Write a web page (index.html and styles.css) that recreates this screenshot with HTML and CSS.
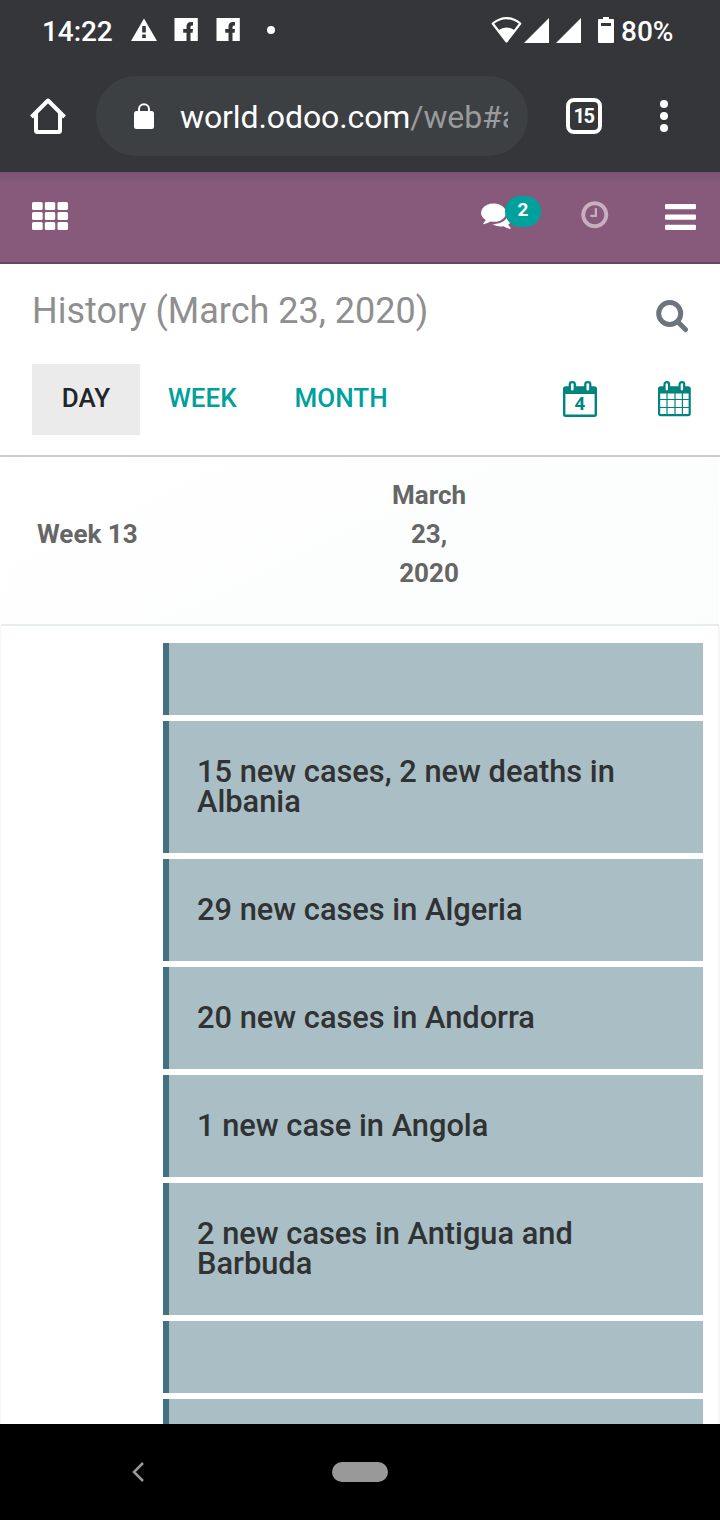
FILE: index.html
```html
<!DOCTYPE html>
<html lang="en">
<head>
<meta charset="utf-8">
<title>History</title>
<link rel="stylesheet" href="styles.css">
</head>
<body>
<div class="screen">
  <header class="browser">
    <div class="status">
      <span class="clock">14:22</span>
      <svg class="notifications" width="146" height="24" viewBox="0 0 146 24" fill="#fff">
        <path fill-rule="evenodd" d="M13 .5 26 23H0zM11.200 8v6.500h3.600V8zm0 8.500v3.500h3.600v-3.500z"/>
        <path d="M43.500 0h23.300v23H43.500zM85.500 0h23.300v23H85.500z"/>
        <path d="M55.500 23v-8.300h-3.300V11h3.300V8.500q0-4.500 4.500-4.500h2v3.400h-1q-1.500 0-1.500 1.500V11H62l-.4 3.700h-2.100V23zM97.500 23v-8.300h-3.300V11h3.300V8.500q0-4.500 4.500-4.500h2v3.400h-1q-1.500 0-1.500 1.500V11h2.500l-.4 3.700h-2.100V23z" fill="#35363a"/>
        <circle cx="140" cy="12" r="4"/>
      </svg>
      <svg class="signals" width="123" height="28" viewBox="0 0 123 28" fill="#fff">
        <path d="M15.500 25.500 1.700 7.500Q15.500-3.200 29.300 7.500z" fill="none" stroke="#fff" stroke-width="2.200" stroke-linejoin="round"/>
        <path d="M15.500 26 7 14.600q8.500-6.200 17 0z"/>
        <path d="M33 27 58 2v25zM65 27 90 2v25z"/>
        <path fill-rule="evenodd" d="M108 3h4V1h6v2h4q1 0 1 1v22q0 1-1 1h-14q-1 0-1-1V4q0-1 1-1zm2 4v3h10V7z"/>
      </svg>
      <span class="battery">80%</span>
    </div>
    <div class="toolbar">
      <svg class="home" width="36" height="36" viewBox="0 0 36 36" fill="none" stroke="#fff" stroke-width="4" stroke-linejoin="round">
        <path d="M1.500 19 18 2.500 34.500 19M6 15v17.500q0 1.500 1.500 1.500h21q1.500 0 1.500-1.500V15"/>
      </svg>
      <div class="address">
        <svg width="20" height="26" viewBox="0 0 20 26">
          <rect y="8" width="20" height="18" rx="2.500" fill="#fff"/>
          <path d="M5 9V6.200a5 5 0 0 1 10 0V9" fill="none" stroke="#fff" stroke-width="2"/>
        </svg>
        <div class="url">world.odoo.com<span>/web#a</span></div>
      </div>
      <div class="tabs">15</div>
      <svg class="more" width="8" height="32" viewBox="0 0 8 32" fill="#fff">
        <circle cx="4" cy="4" r="4"/><circle cx="4" cy="16" r="4"/><circle cx="4" cy="28" r="4"/>
      </svg>
    </div>
  </header>

  <nav class="navbar">
    <svg class="apps" width="36" height="28" viewBox="0 0 36 28" fill="#fff">
      <rect width="10.700" height="8" rx="1.500"/><rect x="12.800" width="10.400" height="8" rx="1.500"/><rect x="25.500" width="10.500" height="8" rx="1.500"/>
      <rect y="10" width="10.700" height="8" rx="1.500"/><rect x="12.800" y="10" width="10.400" height="8" rx="1.500"/><rect x="25.500" y="10" width="10.500" height="8" rx="1.500"/>
      <rect y="20" width="10.700" height="8" rx="1.500"/><rect x="12.800" y="20" width="10.400" height="8" rx="1.500"/><rect x="25.500" y="20" width="10.500" height="8" rx="1.500"/>
    </svg>
    <div class="messages">
      <svg width="32" height="32" viewBox="0 0 1792 1792" fill="#fff"><path d="M1408 768q0 139-94 257t-256.500 186.500-353.500 68.500q-86 0-176-16-124 88-278 128-36 9-86 16h-3q-11 0-20.500-8t-11.500-21q-1-3-1-6.500t.5-6.500 2-6l2.500-5 3.500-5.500 4-5 4.500-5 4-4.500q5-6 23-25t26-29.500 22.500-29 25-38.500 20.500-44q-124-72-195-177t-71-224q0-139 94-257t256.500-186.500 353.500-68.500 353.500 68.500 256.500 186.500 94 257zm384 256q0 120-71 224.500t-195 176.500q10 24 20.500 44t25 38.500 22.500 29 26 29.500 23 25q1 1 4 4.500t4.500 5 4 5 3.500 5.500l2.500 5 2 6 .5 6.500-1 6.500q-3 14-13 22t-22 7q-50-7-86-16-154-40-278-128-90 16-176 16-271 0-472-132 58 4 88 4 161 0 309-45t264-129q125-92 192-212t67-254q0-77-23-152 129 71 204 178t75 230z"/></svg>
      <span class="badge">2</span>
    </div>
    <svg class="activity" width="31.500" height="31.500" viewBox="0 0 1792 1792"><path d="M1024 544v448q0 14-9 23t-23 9h-320q-14 0-23-9t-9-23v-64q0-14 9-23t23-9h224v-352q0-14 9-23t23-9h64q14 0 23 9t9 23zm416 352q0-148-73-273t-198-198-273-73-273 73-198 198-73 273 73 273 198 198 273 73 273-73 198-198 73-273zm224 0q0 209-103 385.500t-279.500 279.500-385.500 103-385.500-103-279.500-279.500-103-385.500 103-385.500 279.500-279.500 385.500-103 385.500 103 279.500 279.500 103 385.500z"/></svg>
    <svg class="menu" width="31" height="26" viewBox="0 0 31 26" fill="#fff">
      <rect width="31" height="5.300" rx="1.200"/><rect y="10.500" width="31" height="5.300" rx="1.200"/><rect y="20.700" width="31" height="5.300" rx="1.200"/>
    </svg>
  </nav>

  <section class="controls">
    <div class="heading">
      <h1>History (March 23, 2020)</h1>
      <svg width="33" height="33" viewBox="0 0 33 33" fill="none" stroke="#6c757d" stroke-width="5">
        <circle cx="13.700" cy="13.500" r="11"/><path d="m22 22 7.500 7.500" stroke-linecap="round"/>
      </svg>
    </div>
    <div class="actions">
      <button class="scale active">Day</button>
      <button class="scale week">Week</button>
      <button class="scale month">Month</button>
      <svg class="today" width="34" height="36" viewBox="0 0 34 36">
        <path d="M1 7h32v6H1z" fill="#00847f"/>
        <rect x="1.200" y="6.500" width="31.600" height="28.300" rx="1.500" fill="none" stroke="#00847f" stroke-width="2.400"/>
        <g fill="#fff" stroke="#00847f" stroke-width="2.300"><rect x="6.800" y="1.200" width="5" height="9.500" rx="2.300"/><rect x="22.300" y="1.200" width="5" height="9.500" rx="2.300"/></g>
        <text x="17" y="28.500" text-anchor="middle">4</text>
      </svg>
      <svg class="calendar" width="33" height="36" viewBox="0 0 33 36">
        <path d="M1 7h31v5.500H1z" fill="#00847f"/>
        <rect x="1.100" y="6.300" width="30.600" height="27.800" rx="1.500" fill="none" stroke="#00847f" stroke-width="2.200"/>
        <path d="M9 12v22M17 12v22M24.400 12v22M1 18.500h31M1 26.500h31" stroke="#00847f" stroke-width="1.200"/>
        <g fill="#fff" stroke="#00847f" stroke-width="2.200"><rect x="6.500" y="1.200" width="4.600" height="9.300" rx="2.200"/><rect x="21.600" y="1.200" width="4.600" height="9.300" rx="2.200"/></g>
      </svg>
    </div>
  </section>

  <main class="agenda">
    <div class="dayhead">
      <div class="weekno">Week 13</div>
      <div class="date">March<br>23,<br>2020</div>
    </div>
    <div class="events">
      <article class="event"></article>
      <article class="event">15 new cases, 2 new deaths in Albania</article>
      <article class="event">29 new cases in Algeria</article>
      <article class="event">20 new cases in Andorra</article>
      <article class="event">1 new case in Angola</article>
      <article class="event">2 new cases in Antigua and Barbuda</article>
      <article class="event"></article>
      <article class="event"></article>
    </div>
  </main>

  <footer class="system">
    <svg width="12" height="20" viewBox="0 0 12 20" fill="none" stroke="#999" stroke-width="2.500"><path d="M11 1 2 10l9 9"/></svg>
    <span class="pill"></span>
  </footer>
</div>
</body>
</html>
```
FILE: styles.css
```css
* { box-sizing: border-box; }
body { margin: 0; font-family: Roboto, "Liberation Sans", sans-serif; background: #fff; }
svg { display: block; flex: none; }
.screen { width: 720px; height: 1520px; display: flex; flex-direction: column; overflow: hidden; }
.browser { height: 172px; flex: none; background: #35363a; color: #fff; }
.status { height: 60px; display: flex; align-items: center; padding: 3px 0 0 42px; font-size: 28px; font-weight: 500; }
.clock { width: 89px; letter-spacing: -0.1px; }
.notifications { margin-top: -3px; }
.signals { margin: -3px 0 0 214px; }
.battery { margin-left: 7px; }
.clock, .battery { line-height: 36px; flex: none; }
.toolbar { height: 112px; display: flex; align-items: center; padding-left: 30px; }
.address { width: 432px; height: 80px; margin: 0 0 0 30px; padding: 0 20px 0 38px; display: flex; align-items: center; border-radius: 40px; background: #3c4043; }
.url { width: 328px; margin: 2px 0 0 26px; overflow: hidden; white-space: nowrap; font-size: 32px; line-height: 40px; letter-spacing: -0.1px; }
.url span { color: #9a9b9d; }
.tabs { width: 36px; height: 36px; margin-left: 38px; border: 4px solid #fff; border-radius: 8px; text-align: center; font: 700 20px/28px Roboto, sans-serif; letter-spacing: -1.5px; padding-right: 1px; }
.more { margin-left: 58px; }
.navbar { height: 92px; flex: none; display: flex; align-items: flex-start; padding-left: 32px; border-bottom: 2px solid #68465f; background: linear-gradient(#7b536f, #875a7b 12px); }
.apps { margin-top: 30px; }
.messages { display: flex; margin: 24px 0 0 413px; }
.messages svg { margin-top: 3px; }
.badge { width: 36px; height: 31px; margin-left: -8px; border-radius: 16px; background: #00a09d; color: #fff; text-align: center; font-size: 19px; font-weight: 700; line-height: 28px; position: relative; }
.activity { margin: 27px 0 0 38px; fill: #c6b0c0; }
.menu { margin: 32px 0 0 54px; }
.controls { height: 193px; flex: none; padding: 25px 29px 19px 32px; border-bottom: 2px solid #ccc; }
.heading { display: flex; justify-content: space-between; height: 75px; }
.heading svg { margin-top: 11px; margin-right: 2px; }
h1 { margin: 0; font-size: 36px; line-height: 44px; font-weight: 400; color: #8f8f8f; }
.actions { display: flex; }
.scale { height: 71px; padding: 0 0 2px; border: 0; background: none; font: 500 26px/39px Roboto, sans-serif; text-transform: uppercase; color: #00a09d; text-align: center; }
.active { width: 108px; background: #ebebeb; color: #212529; }
.week { width: 125px; }
.month { width: 153px; }
.today { margin: 17px 0 0 145.500px; }
.today text { font: 700 18px "Open Sans", sans-serif; fill: #00847f; }
.calendar { margin: 17px 0 0 61px; }
.agenda { height: 967px; flex: none; overflow: hidden; }
.dayhead { height: 169px; margin: 0 1px; display: flex; align-items: center; padding-bottom: 12px; border-bottom: 2px solid #e7ecef; background: linear-gradient(155deg, #fff, #fbfcfc); font-size: 26px; font-weight: 700; line-height: 39px; color: #666; }
.weekno { width: 138px; padding-left: 36px; white-space: nowrap; }
.date { width: 580px; text-align: center; }
.events { min-height: 798px; display: flex; flex-direction: column; gap: 6px; padding: 17px 15px 0 162px; border: 1px solid #f6f6f6; border-width: 0 2px 0 1px; }
.event { padding: 36px 28px; border-left: 6px solid #437180; background: #aabfc5; font-size: 30.800px; line-height: 30px; font-weight: 500; color: #303234; }
.system { height: 96px; display: flex; align-items: center; padding-left: 132px; background: #000; }
.pill { width: 56px; height: 20px; margin-left: 188px; border-radius: 10px; background: #999; }
```
